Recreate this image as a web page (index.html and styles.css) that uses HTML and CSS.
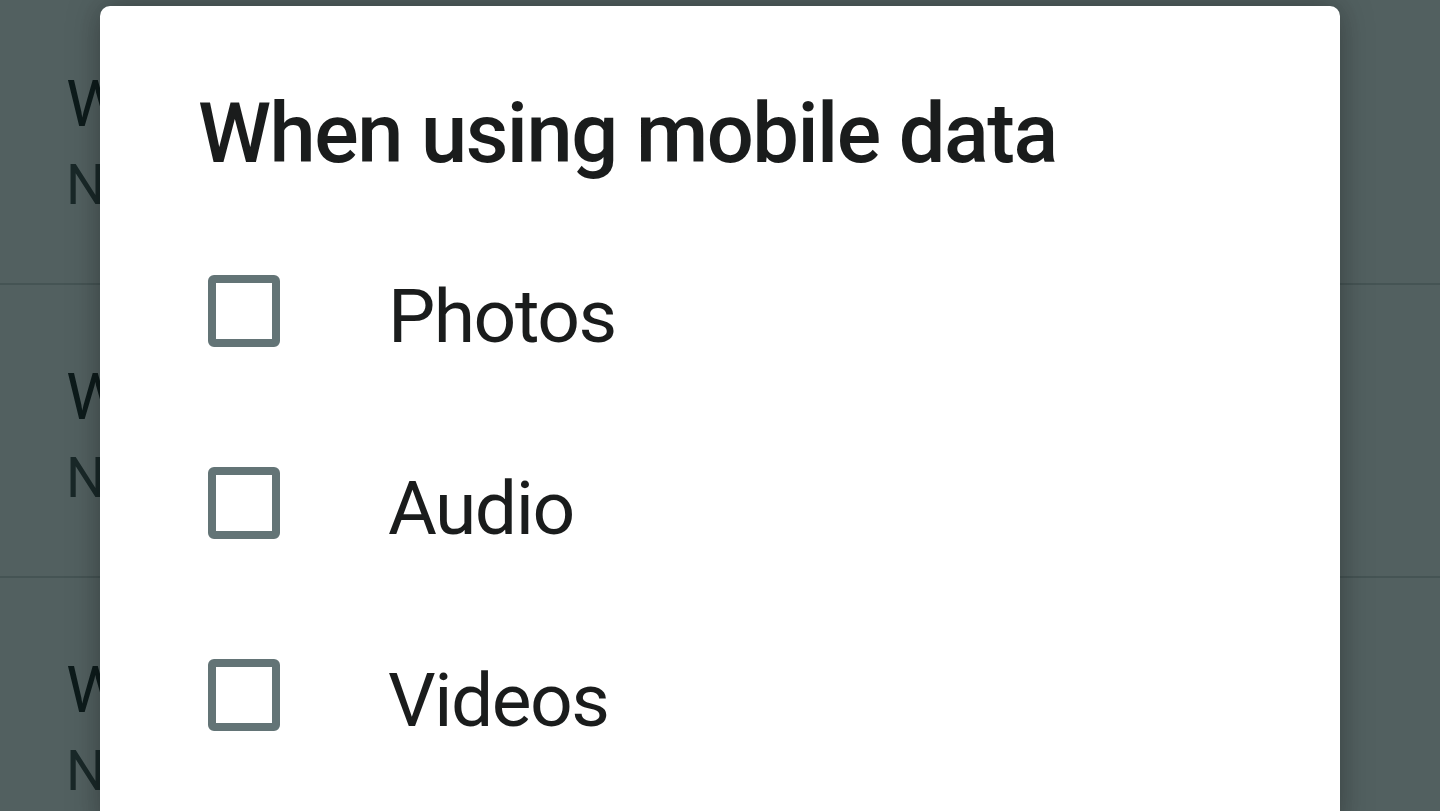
FILE: index.html
```html
<!DOCTYPE html>
<html lang="en">
<head>
    <meta charset="UTF-8">
    <meta name="viewport" content="width=device-width, initial-scale=1.0">
    <title>Media auto-download</title>
    <link rel="stylesheet" href="styles.css">
</head>
<body>
    <!-- settings list behind the dialog -->
    <div class="list">
        <div class="row">
            <div class="row-title">When using mobile data</div>
            <div class="row-sub">No media</div>
        </div>
        <div class="row">
            <div class="row-title">When connected on Wi-Fi</div>
            <div class="row-sub">No media</div>
        </div>
        <div class="row">
            <div class="row-title">When roaming</div>
            <div class="row-sub">No media</div>
        </div>
    </div>

    <div class="scrim"></div>

    <div class="dialog">
        <h1 class="dialog-title">When using mobile data</h1>
        <div class="options">
            <label class="option">
                <span class="box"></span>
                <span class="option-text">Photos</span>
            </label>
            <label class="option">
                <span class="box"></span>
                <span class="option-text">Audio</span>
            </label>
            <label class="option">
                <span class="box"></span>
                <span class="option-text">Videos</span>
            </label>
        </div>
    </div>
</body>
</html>
```

FILE: styles.css
```css
html, body{
    margin: 0;
    height: 100%;
    overflow: hidden;
}
body{
    background: #ffffff;
    font-family: Roboto, "Noto Sans", Arial, sans-serif;
    color: #000000;
}

/* list under the dialog */
.list{
    height: 100%;
    overflow: hidden;
}
.row{
    padding: 72px 0 0 66px;
    height: 219px;
    border-bottom: 2px solid #cfd2d2;
}
.row:first-child{
    padding-top: 64px;
}
.row-title{
    font-size: 65px;
    line-height: 80px;
    color: #000000;
    white-space: nowrap;
}
.row-sub{
    margin-top: 6px;
    font-size: 55px;
    line-height: 70px;
    color: #2e3333;
    white-space: nowrap;
}

.scrim{
    position: fixed;
    inset: 0;
    background: rgba(18, 37, 37, 0.73);
}

/* dialog */
.dialog{
    position: fixed;
    top: 6px;
    left: 100px;
    right: 100px;
    bottom: -20px;
    background: #ffffff;
    border-radius: 10px;
    box-shadow: 0 0 32px rgba(0, 0, 0, 0.35);
    padding: 78px 0 0 98px;
    overflow: hidden;
}
.dialog-title{
    margin: 0;
    font-size: 83px;
    line-height: 100px;
    font-weight: 500;
    letter-spacing: -1.5px;
    color: #1a1c1c;
}
.options{
    margin-top: 36px;
}
.option{
    display: flex;
    align-items: center;
    height: 192px;
}
.box{
    width: 72px;
    height: 72px;
    box-sizing: border-box;
    border: 8px solid #637476;
    border-radius: 6px;
    margin: 0 0 10px 10px;
    flex-shrink: 0;
}
.option-text{
    margin-left: 108px;
    font-size: 75px;
    line-height: 192px;
    letter-spacing: -1.5px;
    color: #1a1c1c;
}
```
